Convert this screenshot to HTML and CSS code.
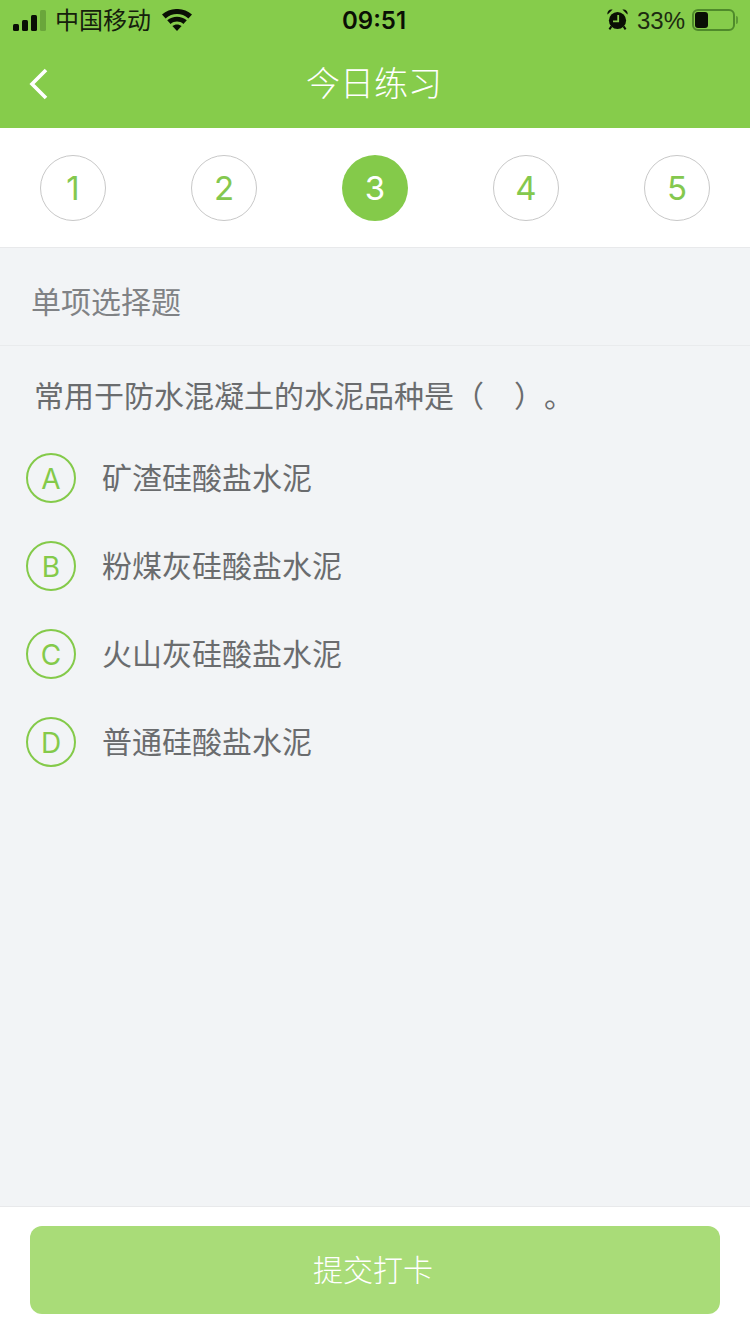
FILE: index.html
```html
<!DOCTYPE html>
<html lang="zh-CN">

<head>
  <meta charset="utf-8">
  <title>今日练习</title>
  <link rel="stylesheet" href="styles.css">
</head>

<body>
  <div class="page">
    <header class="header">
      <div class="status">
        <div class="status-left">
          <div class="signal">
            <span class="bar bar-1"></span>
            <span class="bar bar-2"></span>
            <span class="bar bar-3"></span>
            <span class="bar bar-4"></span>
          </div>
          <span class="carrier">中国移动</span>
          <svg class="wifi" viewBox="0 0 30 22">
            <path d="M15 22L10.4 17C13 14.9 17 14.9 19.6 17Z" />
            <path d="M8.6 15L5.2 11.3C10.8 6.4 19.2 6.4 24.8 11.3L21.4 15C17.6 11.8 12.4 11.8 8.6 15Z" />
            <path d="M3.6 9.5L0 5.6C8.4 -1.9 21.6 -1.9 30 5.6L26.4 9.5C19.8 3.6 10.2 3.6 3.6 9.5Z" />
          </svg>
        </div>
        <div class="time">09:51</div>
        <div class="status-right">
          <svg class="alarm" viewBox="0 0 21 21">
            <path d="M.6 5.6C-.4 2.6 2.2 -.4 5.6 .6Z" />
            <path d="M20.4 5.6C21.4 2.6 18.8 -.4 15.4 .6Z" />
            <circle cx="10.5" cy="11.5" r="8.6" />
            <path d="M4.4 17.4L2.4 20.4M16.6 17.4L18.6 20.4" stroke="#0a0f05" stroke-width="2" />
            <path d="M11.2 6V12.4H6" fill="none" stroke="#86cc4b" stroke-width="1.8" />
          </svg>
          <span class="percent">33%</span>
          <div class="battery">
            <div class="battery-level"></div>
          </div>
          <div class="battery-tip"></div>
        </div>
      </div>
      <div class="nav">
        <svg class="back" viewBox="0 0 20 32">
          <path d="M17 2L3 16L17 30" />
        </svg>
        <h1 class="nav-title">今日练习</h1>
      </div>
    </header>

    <div class="steps">
      <div class="step">1</div>
      <div class="step">2</div>
      <div class="step active">3</div>
      <div class="step">4</div>
      <div class="step">5</div>
    </div>

    <main class="content">
      <div class="type">单项选择题</div>
      <div class="question">常用于防水混凝土的水泥品种是（&nbsp;&nbsp;&nbsp;&nbsp;）。</div>
      <div class="options">
        <div class="option"><span class="letter">A</span><span class="option-text">矿渣硅酸盐水泥</span></div>
        <div class="option"><span class="letter">B</span><span class="option-text">粉煤灰硅酸盐水泥</span></div>
        <div class="option"><span class="letter">C</span><span class="option-text">火山灰硅酸盐水泥</span></div>
        <div class="option"><span class="letter">D</span><span class="option-text">普通硅酸盐水泥</span></div>
      </div>
    </main>

    <footer class="footer">
      <div class="submit">提交打卡</div>
    </footer>
  </div>
</body>

</html>
```

FILE: styles.css
```css
* {
  margin: 0;
  padding: 0;
  box-sizing: border-box;
}

body {
  background: #f2f4f6;
  font-family: "Liberation Sans", "Noto Sans CJK SC", sans-serif;
  overflow: hidden;
}

.page {
  display: flex;
  flex-direction: column;
  width: 750px;
  height: 1334px;
}

.header {
  height: 128px;
  background: #86cc4b;
}

.status {
  display: flex;
  justify-content: space-between;
  align-items: center;
  height: 40px;
  color: #0a0f05;
}

.status-left {
  display: flex;
  align-items: center;
  width: 260px;
  padding-left: 13px;
}

.signal {
  display: flex;
  align-items: flex-end;
  gap: 3px;
  width: 33px;
  height: 21px;
}

.bar {
  flex: none;
  width: 6px;
  border-radius: 1.5px;
  background: #0a0f05;
}

.bar-1 {
  height: 7px;
}

.bar-2 {
  height: 11px;
}

.bar-3 {
  height: 16px;
}

.bar-4 {
  height: 21px;
  background: #6aa63b;
}

.carrier {
  margin-left: 9px;
  padding-bottom: 3px;
  font-size: 24px;
  font-family: "Noto Sans CJK SC", sans-serif;
  color: #15200c;
}

.wifi {
  width: 30px;
  height: 22px;
  margin-left: 11px;
  fill: #0a0f05;
}

.time {
  padding-right: 2px;
  font-size: 24px;
  font-family: Inter, "Liberation Sans", sans-serif;
  font-weight: 600;
}

.status-right {
  display: flex;
  align-items: center;
  justify-content: flex-end;
  width: 260px;
  padding-right: 12px;
}

.alarm {
  width: 21px;
  height: 21px;
  margin-bottom: 2px;
  fill: #0a0f05;
}

.percent {
  margin-left: 9px;
  padding-top: 2px;
  font-size: 24px;
  color: #1c2a10;
}

.battery {
  width: 43px;
  height: 22px;
  margin-left: 7px;
  padding: 1px;
  border: 2px solid #4f8a2b;
  border-radius: 6px;
}

.battery-level {
  width: 13px;
  height: 16px;
  border-radius: 3px;
  background: #0a0f05;
}

.battery-tip {
  width: 2px;
  height: 8px;
  margin-left: 1px;
  border-radius: 0 2px 2px 0;
  background: #5d9a35;
}

.nav {
  position: relative;
  display: flex;
  justify-content: center;
  align-items: center;
  height: 88px;
  padding: 0 2px 5px 0;
}

.back {
  position: absolute;
  left: 29px;
  top: 28px;
  width: 20px;
  height: 32px;
  fill: none;
  stroke: #fff;
  stroke-width: 3.6;
}

.nav-title {
  font-size: 34px;
  font-weight: 300;
  font-family: "Noto Sans CJK SC", sans-serif;
  color: #fff;
}

.steps {
  display: flex;
  justify-content: space-between;
  height: 120px;
  padding: 27px 40px 0;
  background: #fff;
  border-bottom: 1px solid #e8e9eb;
}

.step {
  display: flex;
  justify-content: center;
  align-items: center;
  width: 66px;
  height: 66px;
  border: 1px solid #c8c8c8;
  border-radius: 50%;
  font-family: Inter, "Liberation Sans", sans-serif;
  font-size: 33px;
  color: #84c84e;
}

.step.active {
  border: none;
  background: #84ca4a;
  color: #fff;
}

.content {
  flex: 1;
}

.type {
  display: flex;
  align-items: center;
  height: 98px;
  padding: 6px 0 0 31px;
  border-bottom: 1px solid #e9ebed;
  font-size: 30px;
  font-family: "Noto Sans CJK SC", sans-serif;
  color: #808285;
}

.question {
  height: 88px;
  padding: 26px 0 0 34px;
  font-size: 30px;
  line-height: 44px;
  font-family: "Noto Sans CJK SC", sans-serif;
  text-spacing-trim: space-all;
  word-spacing: .75px;
  color: #6a6c6e;
}

.options {
  display: flex;
  flex-direction: column;
}

.option {
  display: flex;
  align-items: center;
  height: 88px;
  padding-left: 26px;
}

.letter {
  display: flex;
  justify-content: center;
  align-items: center;
  width: 50px;
  height: 50px;
  padding-top: 1px;
  border: 2px solid #84ca4a;
  border-radius: 50%;
  font-family: Inter, "Liberation Sans", sans-serif;
  font-size: 28px;
  color: #84ca4a;
}

.option-text {
  margin-left: 26px;
  padding-bottom: 4px;
  font-size: 30px;
  font-family: "Noto Sans CJK SC", sans-serif;
  color: #6a6c6e;
}

.footer {
  height: 128px;
  padding: 19px 30px 0;
  background: #fff;
  border-top: 1px solid #e8e9eb;
}

.submit {
  display: flex;
  justify-content: center;
  align-items: center;
  height: 88px;
  padding: 0 4px 4px 0;
  border-radius: 12px;
  background: #a9dc78;
  font-size: 30px;
  font-family: "Noto Sans CJK SC", sans-serif;
  font-weight: 300;
  color: #fff;
}
```
